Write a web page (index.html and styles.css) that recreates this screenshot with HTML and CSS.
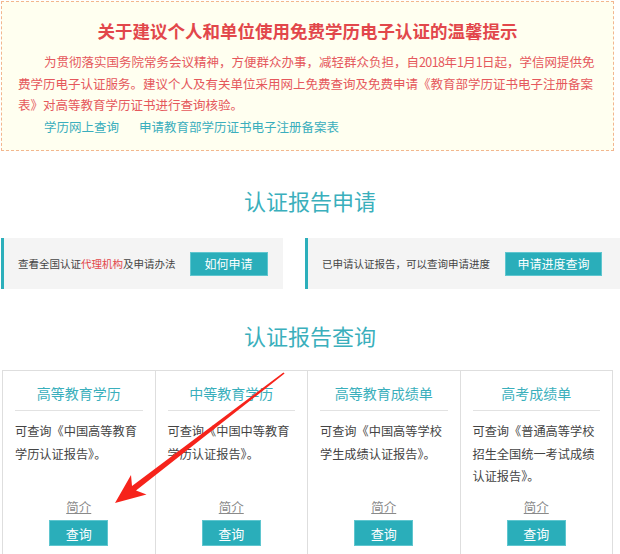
FILE: index.html
```html
<!DOCTYPE html>
<html lang="zh-CN">
<head>
<meta charset="utf-8">
<title>学历认证</title>
<link rel="stylesheet" href="styles.css">
</head>
<body>
<div class="page">
  <div class="notice">
    <h1 class="notice-title">关于建议个人和单位使用免费学历电子认证的温馨提示</h1>
    <p class="notice-text">为贯彻落实国务院常务会议精神，方便群众办事，减轻群众负担，自<span class="num">2018</span>年<span class="num">1</span>月<span class="num">1</span>日起，学信网提供免<br>费学历电子认证服务。建议个人及有关单位采用网上免费查询及免费申请《教育部学历证书电子注册备案<br>表》对高等教育学历证书进行查询核验。</p>
    <div class="notice-links">
      <a class="notice-link">学历网上查询</a>
      <a class="notice-link">申请教育部学历证书电子注册备案表</a>
    </div>
  </div>

  <h2 class="section-title section-apply">认证报告申请</h2>
  <div class="apply-row">
    <div class="apply-box">
      <span class="apply-text">查看全国认证<span class="hl">代理机构</span>及申请办法</span>
      <a class="btn btn-apply">如何申请</a>
    </div>
    <div class="apply-box">
      <span class="apply-text">已申请认证报告，可以查询申请进度</span>
      <a class="btn btn-progress">申请进度查询</a>
    </div>
  </div>

  <h2 class="section-title section-query">认证报告查询</h2>
  <div class="cards">
    <div class="card">
      <div class="card-title">高等教育学历</div>
      <p class="card-desc">可查询《中国高等教育学历认证报告》。</p>
      <a class="card-intro">简介</a>
      <a class="btn btn-query">查询</a>
    </div>
    <div class="card">
      <div class="card-title">中等教育学历</div>
      <p class="card-desc">可查询《中国中等教育学历认证报告》。</p>
      <a class="card-intro">简介</a>
      <a class="btn btn-query">查询</a>
    </div>
    <div class="card">
      <div class="card-title">高等教育成绩单</div>
      <p class="card-desc">可查询《中国高等学校学生成绩认证报告》。</p>
      <a class="card-intro">简介</a>
      <a class="btn btn-query">查询</a>
    </div>
    <div class="card">
      <div class="card-title">高考成绩单</div>
      <p class="card-desc">可查询《普通高等学校招生全国统一考试成绩认证报告》。</p>
      <a class="card-intro">简介</a>
      <a class="btn btn-query">查询</a>
    </div>
  </div>

  <svg class="arrow" width="620" height="554" viewBox="0 0 620 554" aria-hidden="true">
    <polygon fill="#f6231b" points="115,503 146.5,494.5 136,490.5 284.6,373.6 283.4,372.4 132,486 131,475 115,503"/>
  </svg>
</div>
</body>
</html>
```

FILE: styles.css
```css
* { box-sizing: border-box; }

html, body {
  margin: 0;
  padding: 0;
  background: #ffffff;
}

body {
  font-family: "Noto Sans CJK SC", "Microsoft YaHei", sans-serif;
  color: #444;
}

.page {
  position: relative;
  width: 620px;
  height: 554px;
  overflow: hidden;
}

/* ---------- notice ---------- */
.notice {
  margin: 1px 6px 0 1px;
  height: 150px;
  border: 1px dashed #f2b68f;
  background: #fffff0;
  padding: 17px 10px 0 16px;
}

.notice-title {
  margin: 0 0 0 -6px;
  text-align: center;
  font-size: 17.5px;
  line-height: 24px;
  font-weight: bold;
  color: #e2474b;
}

.notice-text {
  margin: 8px 0 0;
  font-size: 12.5px;
  line-height: 21.5px;
  color: #e5585c;
  text-indent: 26px;
}

.num {
  letter-spacing: -0.6px;
}

.notice-links {
  padding-left: 26px;
  font-size: 12.5px;
  line-height: 21.5px;
  display: flex;
  gap: 20px;
}

.notice-link {
  color: #3aaebd;
}

/* ---------- section titles ---------- */
.section-title {
  margin: 0;
  text-align: center;
  font-size: 22px;
  line-height: 30px;
  font-weight: normal;
  color: #3aafbc;
}

.section-apply {
  margin-top: 34px;
}

.section-query {
  margin-top: 31px;
}

/* ---------- apply boxes ---------- */
.apply-row {
  margin: 23px 0 0 1px;
  display: grid;
  grid-template-columns: 282px 1fr;
  gap: 22px;
}

.apply-box {
  height: 51px;
  background: #f4f4f4;
  border-left: 3px solid #2cafbb;
  display: flex;
  align-items: center;
  padding-left: 14px;
}

.apply-text {
  font-size: 10.5px;
  color: #444;
  white-space: nowrap;
}

.hl {
  color: #e2474b;
}

.btn {
  display: flex;
  align-items: center;
  justify-content: center;
  background: #2aaeba;
  color: #ffffff;
  border: 1px solid #5fc6cf;
}

.btn-apply {
  margin-left: 14px;
  width: 78px;
  height: 24px;
  font-size: 12px;
}

.btn-progress {
  margin-left: 15px;
  width: 97px;
  height: 24px;
  font-size: 12px;
}

/* ---------- cards ---------- */
.cards {
  margin: 20px 0 0 2px;
  width: 611px;
  display: grid;
  grid-template-columns: repeat(4, 1fr);
  border-top: 1px solid #dedede;
  border-left: 1px solid #dedede;
}

.card {
  height: 200px;
  border-right: 1px solid #dedede;
  padding: 12px 12px 0;
  display: flex;
  flex-direction: column;
  align-items: center;
}

.card-title {
  align-self: stretch;
  text-align: center;
  font-size: 14px;
  line-height: 20px;
  color: #3aafbc;
  padding-bottom: 7px;
  border-bottom: 1px solid #e2e2e2;
}

.card-desc {
  align-self: stretch;
  margin: 9px 0 0;
  height: 78px;
  font-size: 12.2px;
  line-height: 22.5px;
  color: #444;
}

.card-intro {
  font-size: 12.5px;
  line-height: 18px;
  color: #8a8a8a;
  text-decoration: underline;
}

.btn-query {
  margin-top: 4px;
  width: 59px;
  height: 26px;
  font-size: 13px;
}

/* ---------- overlay arrow ---------- */
.arrow {
  position: absolute;
  top: 0;
  left: 0;
  pointer-events: none;
}
```
